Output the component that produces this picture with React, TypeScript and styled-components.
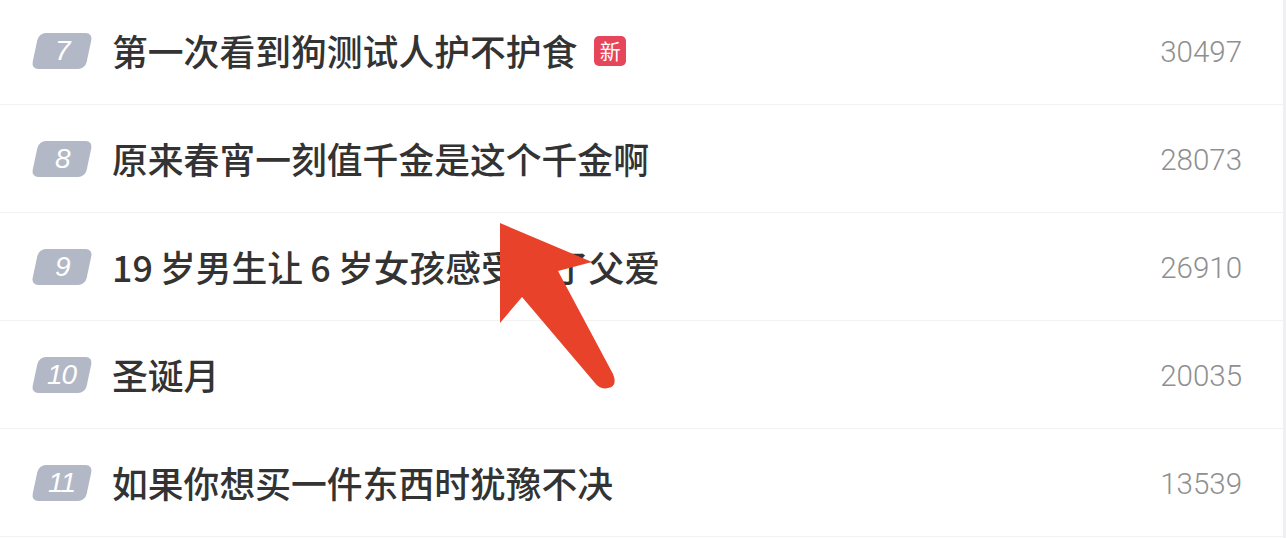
import React from "react";
import styled, { createGlobalStyle } from "styled-components";

const GlobalStyle = createGlobalStyle`
  html, body {
    margin: 0;
    padding: 0;
    background: #f0f0f3;
    font-family: "Noto Sans CJK SC", "Noto Sans", sans-serif;
  }
`;

interface Item {
  rank: number;
  title: string;
  count: number;
  isNew?: boolean;
}

const items: Item[] = [
  { rank: 7, title: "第一次看到狗测试人护不护食", count: 30497, isNew: true },
  { rank: 8, title: "原来春宵一刻值千金是这个千金啊", count: 28073 },
  { rank: 9, title: "19\u2009岁男生让\u20096\u2009岁女孩感受到了父爱", count: 26910 },
  { rank: 10, title: "圣诞月", count: 20035 },
  { rank: 11, title: "如果你想买一件东西时犹豫不决", count: 13539 },
];

const Page = styled.div`
  position: relative;
  width: 1283px;
  height: 538px;
  overflow: hidden;
  background: #ffffff;
`;

const List = styled.ul`
  list-style: none;
  margin: -3px 0 0;
  padding: 0;
`;

const Row = styled.li`
  display: flex;
  align-items: center;
  height: 107px;
  padding: 0 41px 0 32px;
  border-bottom: 1px solid #f2f2f4;
`;

const Rank = styled.span`
  display: flex;
  align-items: center;
  justify-content: center;
  width: 54px;
  height: 36px;
  margin-left: 3px;
  flex-shrink: 0;
  background: #b3b8c6;
  border-radius: 7px;
  transform: skewX(-12deg);
`;

const RankNum = styled.span`
  color: #ffffff;
  font-family: "Liberation Sans", Arial, sans-serif;
  font-style: italic;
  font-size: 28px;
  line-height: 1;
  transform: skewX(12deg);
  letter-spacing: -1px;
`;

const Title = styled.span`
  margin-left: 23px;
  color: #333333;
  font-size: 35.8px;
  font-weight: 500;
  line-height: 1;
  white-space: nowrap;
`;

const NewTag = styled.span`
  display: inline-flex;
  align-items: center;
  justify-content: center;
  width: 32px;
  height: 30px;
  margin-left: 17px;
  background: #e6455a;
  border-radius: 5px;
  color: #ffffff;
  font-size: 21px;
  line-height: 1;
`;

const Count = styled.span`
  margin-left: auto;
  margin-top: 4px;
  color: #8f8f8f;
  font-family: Roboto, "Liberation Sans", sans-serif;
  font-weight: 300;
  font-size: 29.5px;
  line-height: 1;
`;

const Arrow = styled.svg`
  position: absolute;
  left: 0;
  top: 0;
  pointer-events: none;
`;

export default function App() {
  return (
    <>
      <GlobalStyle />
      <Page>
        <List>
          {items.map((item) => (
            <Row key={item.rank}>
              <Rank>
                <RankNum>{item.rank}</RankNum>
              </Rank>
              <Title>{item.title}</Title>
              {item.isNew && <NewTag>新</NewTag>}
              <Count>{item.count}</Count>
            </Row>
          ))}
        </List>
        <Arrow width="1283" height="538" viewBox="0 0 1283 538">
          <path
            d="M500 223 L592 262 L558 271 L613 374 Q618 386 608 388 Q600 390 595 383 L522 297 L500 323 Z"
            fill="#e8432a"
          />
        </Arrow>
      </Page>
    </>
  );
}
